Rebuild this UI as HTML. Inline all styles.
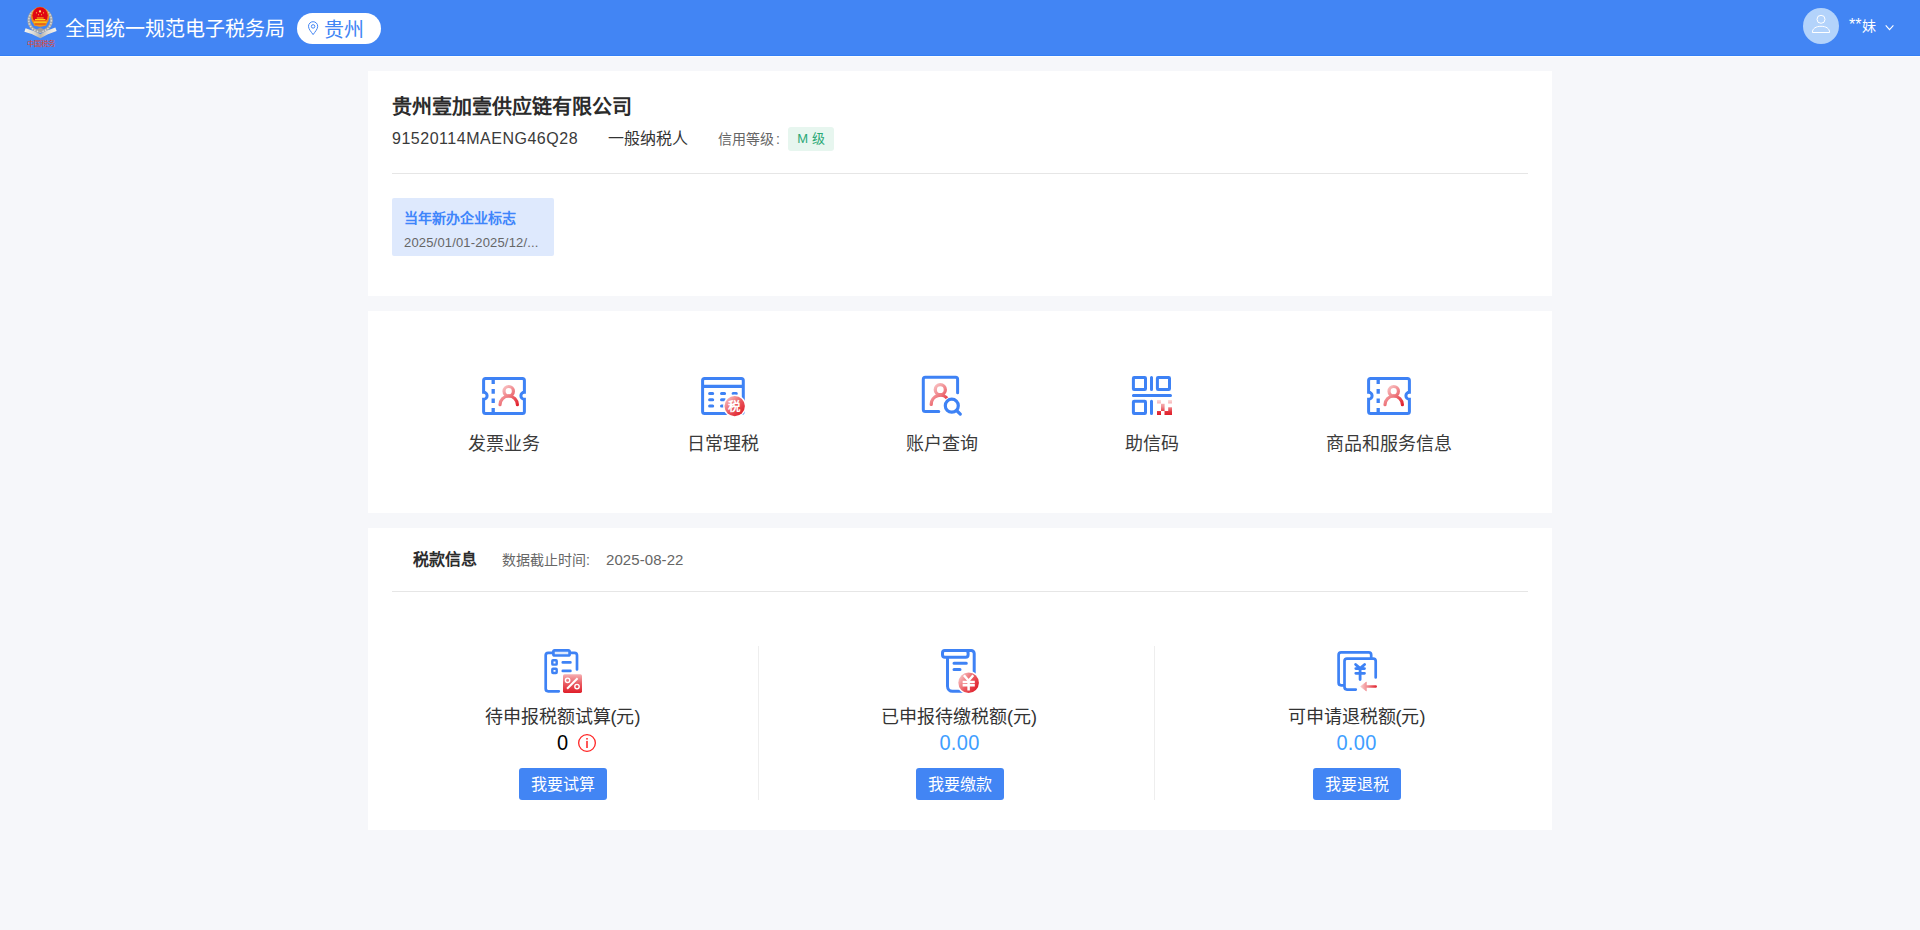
<!DOCTYPE html>
<html lang="zh-CN">
<head>
<meta charset="utf-8">
<title>全国统一规范电子税务局</title>
<style>
*{box-sizing:border-box;margin:0;padding:0}
html,body{width:1920px;height:930px;overflow:hidden}
body{background:#f6f7fa;font-family:"Liberation Sans",sans-serif;color:#333;position:relative}
.abs{position:absolute;white-space:nowrap;line-height:1}
.hdr{position:absolute;left:0;top:0;width:1920px;height:56px;background:#4285f4;border-bottom:1px solid #347ff5}
.hdrline{position:absolute;left:0;top:56px;width:1920px;height:1px;background:#fdfeff}
.card{position:absolute;left:368px;width:1184px;background:#fff}
.hr{position:absolute;left:392px;width:1136px;height:1px;background:#e6e6e6}
.ctr{position:absolute;white-space:nowrap;line-height:1;text-align:center;transform:translateX(-50%)}
.btn{position:absolute;width:88px;height:32px;border-radius:3px;background:#4285f4;color:#fff;font-size:16px;line-height:34px;text-align:center;white-space:nowrap;overflow:hidden}
.vline{position:absolute;top:646px;width:1px;height:154px;background:#eeeeee}
svg{position:absolute;overflow:visible}
</style>
</head>
<body>

<!-- ================= HEADER ================= -->
<div class="hdr"></div>
<div class="hdrline"></div>

<!-- logo placeholder -->
<svg id="logo" style="left:0;top:0" width="80" height="56" viewBox="0 0 80 56">
<defs>
<radialGradient id="lgR" cx="0.5" cy="0.3" r="0.75"><stop offset="0" stop-color="#e50012"/><stop offset="0.8" stop-color="#dc0a14"/><stop offset="1" stop-color="#e8501a"/></radialGradient>
<linearGradient id="lgRib" x1="0" y1="0" x2="1" y2="0"><stop offset="0" stop-color="#f6f4ee"/><stop offset="0.28" stop-color="#dcdad3"/><stop offset="0.5" stop-color="#b4b2ab"/><stop offset="0.72" stop-color="#dcdad3"/><stop offset="1" stop-color="#f6f4ee"/></linearGradient>
</defs>
<circle cx="40.1" cy="20.3" r="11.3" fill="none" stroke="#a4a6a9" stroke-width="2.7"/>
<circle cx="40.1" cy="20.3" r="11.3" fill="none" stroke="#e3e4e5" stroke-width="1.6" stroke-dasharray="1.3 1.5" opacity="0.85"/>
<path d="M36.6 29.6 L40.3 27.6 L44 29.6 L40.3 32.2 Z" fill="#9c9ea1"/>
<path d="M25 29.9 L33 32.6 L40.4 36.1 L48 32.2 L56 29.2" fill="none" stroke="url(#lgRib)" stroke-width="3.7" stroke-linejoin="miter"/>
<ellipse cx="40.1" cy="16.8" rx="9.1" ry="10" fill="#ef8a1d"/>
<ellipse cx="40.1" cy="15.6" rx="7.7" ry="8.3" fill="url(#lgR)"/>
<path d="M33.3 20.4 L46.9 20.4 L46.2 25.6 Q40.1 27.6 34 25.6 Z" fill="#f1921a"/>
<path d="M35 19 h10.4 v1.2 h-10.4z M36.8 17.6 h6.8 v1 h-6.8z M33.8 21.8 h12.8 v0.9 h-12.8z" fill="#ffd21a"/>
<path d="M34.8 23.6 h10.8 v0.9 h-10.8z" fill="#e03a14"/>
<circle cx="40" cy="11.4" r="1.15" fill="#ffe777"/>
<circle cx="36.5" cy="12.8" r="0.6" fill="#ffd84a"/><circle cx="43.5" cy="12.8" r="0.6" fill="#ffd84a"/>
<circle cx="38.5" cy="14.8" r="0.55" fill="#ffd84a"/><circle cx="41.5" cy="14.8" r="0.55" fill="#ffd84a"/>
<text x="41" y="46.2" font-size="7.2" fill="#e5452b" text-anchor="middle" font-family="Liberation Serif, serif" textLength="29" lengthAdjust="spacingAndGlyphs">中国税务</text>
</svg>

<div class="abs" id="title" style="left:65px;top:19px;font-size:20px;color:#fff">全国统一规范电子税务局</div>

<div class="abs" id="pill" style="left:297px;top:13px;width:84px;height:31px;border-radius:15.5px;background:#fff"></div>
<svg id="pin" style="left:306px;top:20px" width="14" height="17" viewBox="306 20 14 17">
<path d="M313.1 34.6 C311 31.6 308.5 29 308.5 26.3 A4.6 4.6 0 0 1 317.7 26.3 C317.7 29 315.2 31.6 313.1 34.6 Z" fill="none" stroke="#4285f4" stroke-width="1" stroke-linejoin="round"/>
<circle cx="313.1" cy="26.4" r="1.75" fill="none" stroke="#4285f4" stroke-width="1"/>
</svg>
<div class="abs" id="loc" style="left:324px;top:20px;font-size:20px;color:#4285f4">贵州</div>

<div class="abs" id="avatar" style="left:1803px;top:8px;width:36px;height:36px;border-radius:50%;background:#b3d3fb"></div>
<svg id="user" style="left:1803px;top:8px" width="36" height="36" viewBox="1803 8 36 36">
<circle cx="1821" cy="19.3" r="4" fill="none" stroke="#fff" stroke-width="1"/>
<path d="M1812.4 32.5 C1812.4 28.4 1816 26.3 1821 26.3 C1826 26.3 1829.6 28.4 1829.6 32.5 Z" fill="none" stroke="#fff" stroke-width="1" stroke-linejoin="miter"/>
</svg>
<div class="abs" id="uname" style="left:1849px;top:18.5px;font-size:14px;color:#fff"><span style="font-size:16px;line-height:14px;letter-spacing:0.1px;position:relative;top:-0.5px">**</span>妹</div>
<svg id="chev" style="left:1884px;top:23px" width="12" height="9" viewBox="1884 23 12 9">
<path d="M1885.7 25.3 L1889.55 29.7 L1893.4 25.3" fill="none" stroke="#fff" stroke-width="1.1"/>
</svg>

<!-- ================= CARD 1 ================= -->
<div class="card" style="top:71px;height:225px"></div>
<div class="abs" id="corp" style="left:392px;top:97px;font-size:20px;font-weight:bold;color:#2b2b2b">贵州壹加壹供应链有限公司</div>
<div class="abs" id="taxid" style="left:392px;top:130.5px;font-size:16px;color:#3a3a3a;letter-spacing:0.52px">91520114MAENG46Q28</div>
<div class="abs" id="ttype" style="left:608px;top:131px;font-size:16px;color:#333">一般纳税人</div>
<div class="abs" id="credit" style="left:718px;top:132px;font-size:14px;color:#666">信用等级<span style="margin-left:2px">:</span></div>
<div class="abs" id="mbadge" style="left:788px;top:127px;width:46px;height:24px;border-radius:3px;background:#e7f6ef;color:#2aa876;font-size:13px;line-height:24px;text-align:center">M 级</div>
<div class="hr" style="top:173px"></div>
<div class="abs" id="tag" style="left:392px;top:198px;width:162px;height:58px;border-radius:2px;background:#dee9fd"></div>
<div class="abs" id="tagt" style="left:404px;top:211px;font-size:14px;font-weight:bold;color:#3f85fb">当年新办企业标志</div>
<div class="abs" id="tagd" style="left:404px;top:236px;font-size:13px;color:#666;letter-spacing:0.17px">2025/01/01-2025/12/...</div>

<!-- ================= CARD 2 ================= -->
<div class="card" style="top:311px;height:202px"></div>
<div class="ctr" id="l1" style="left:504px;top:435px;font-size:18px;color:#3a3a3a">发票业务</div>
<div class="ctr" id="l2" style="left:723px;top:435px;font-size:18px;color:#3a3a3a">日常理税</div>
<div class="ctr" id="l3" style="left:942px;top:435px;font-size:18px;color:#3a3a3a">账户查询</div>
<div class="ctr" id="l4" style="left:1152px;top:435px;font-size:18px;color:#3a3a3a">助信码</div>
<div class="ctr" id="l5" style="left:1389px;top:435px;font-size:18px;color:#3a3a3a">商品和服务信息</div>

<svg id="icons2" style="left:0;top:0" width="1920" height="930" viewBox="0 0 1920 930">
<defs>
<linearGradient id="gP1" gradientUnits="userSpaceOnUse" x1="501" y1="386" x2="518" y2="405"><stop offset="0" stop-color="#fbd0d0"/><stop offset="0.5" stop-color="#ee7a80"/><stop offset="1" stop-color="#e2202c"/></linearGradient>
<linearGradient id="gP3" gradientUnits="userSpaceOnUse" x1="932" y1="384" x2="949" y2="402"><stop offset="0" stop-color="#fbd0d0"/><stop offset="0.55" stop-color="#ee7a80"/><stop offset="1" stop-color="#e2202c"/></linearGradient>
<linearGradient id="gC2" gradientUnits="userSpaceOnUse" x1="726" y1="397" x2="743" y2="415"><stop offset="0" stop-color="#f9c4c4"/><stop offset="0.55" stop-color="#e9555c"/><stop offset="1" stop-color="#df1a26"/></linearGradient>
<linearGradient id="gQ4" gradientUnits="userSpaceOnUse" x1="0" y1="400" x2="0" y2="415"><stop offset="0" stop-color="#fcdada"/><stop offset="0.45" stop-color="#f08e92"/><stop offset="0.8" stop-color="#e3303a"/><stop offset="1" stop-color="#e01f2a"/></linearGradient>
<g id="ticket">
<path d="M485.6 378.5 H522.4 a2 2 0 0 1 2 2 V392.3 a3.5 3.5 0 0 0 0 7 V411.4 a2 2 0 0 1 -2 2 H485.6 a2 2 0 0 1 -2 -2 V399.3 a3.5 3.5 0 0 0 0 -7 V380.5 a2 2 0 0 1 2 -2 Z" fill="none" stroke="#3e82f5" stroke-width="3"/>
<path d="M493.2 380 V384.1 M493.2 389 V393.8 M493.2 398.4 V403.1 M493.2 408 V412" fill="none" stroke="#3e82f5" stroke-width="3.3"/>
<circle cx="508.7" cy="391.2" r="4.7" fill="none" stroke="url(#gP1)" stroke-width="3.2"/>
<path d="M500 404.7 A8.7 8.7 0 0 1 517.4 404.7" fill="none" stroke="url(#gP1)" stroke-width="3.2" stroke-linecap="round"/>
</g>
</defs>
<use href="#ticket"/>
<use href="#ticket" transform="translate(885 0)"/>

<!-- icon 2 : window + tax badge -->
<rect x="702.6" y="378.5" width="40.7" height="34.9" rx="2" fill="none" stroke="#3e82f5" stroke-width="3"/>
<path d="M702.6 386.4 H743.3" stroke="#3e82f5" stroke-width="3.2" fill="none"/>
<path d="M709.6 393.6 H712.7 M721.5 393.6 H724.6 M733.1 393.6 H736.3 M709.6 399.8 H712.7 M721.5 399.8 H724.6 M709.6 406.1 H712.7 M721.5 406.1 H724.6" stroke="#3e82f5" stroke-width="3" stroke-linecap="round" fill="none"/>
<circle cx="734.7" cy="406.1" r="11.6" fill="#fff"/>
<circle cx="734.7" cy="406.1" r="10.2" fill="url(#gC2)"/>
<text x="734.7" y="410.6" font-size="12.5" font-weight="bold" fill="#fff" text-anchor="middle" font-family="Liberation Sans, sans-serif">税</text>

<!-- icon 3 : account search -->
<path d="M957.6 392.7 V379.3 a2 2 0 0 0 -2 -2 H925.3 a2 2 0 0 0 -2 2 V409.5 a2 2 0 0 0 2 2 H938.8" fill="none" stroke="#3e82f5" stroke-width="3" stroke-linecap="round"/>
<circle cx="940.3" cy="389.7" r="5.05" fill="none" stroke="url(#gP3)" stroke-width="3.3"/>
<path d="M931.2 404.4 A9.1 9.1 0 0 1 947.9 399.4" fill="none" stroke="url(#gP3)" stroke-width="3.3" stroke-linecap="round"/>
<circle cx="951.8" cy="405.7" r="9.1" fill="#fff"/>
<circle cx="951.8" cy="405.7" r="6.5" fill="none" stroke="#3e82f5" stroke-width="3.2"/>
<path d="M956.6 410.5 L960.3 414.1" fill="none" stroke="#3e82f5" stroke-width="3.2" stroke-linecap="round"/>

<!-- icon 4 : QR -->
<rect x="1133.4" y="377.5" width="12.1" height="12" rx="0.7" fill="none" stroke="#3e82f5" stroke-width="3"/>
<rect x="1157.4" y="377.5" width="12.1" height="12" rx="0.7" fill="none" stroke="#3e82f5" stroke-width="3"/>
<rect x="1133.4" y="401.3" width="12.1" height="12.1" rx="0.7" fill="none" stroke="#3e82f5" stroke-width="3"/>
<path d="M1151.5 377.5 V389.5 M1151.5 401.3 V413.4 M1133.4 395.4 H1170.5" fill="none" stroke="#3e82f5" stroke-width="3" stroke-linecap="round"/>
<path d="M1157 400 h3.9 v3.6 h-3.9z M1168.1 400 h3.9 v3.6 h-3.9z M1161 403.8 h3.6 v7.1 h-3.6z M1157 410.9 h4 v4 h-4z M1164.5 410.9 h7.5 v4 h-7.5z M1168.2 407.2 h3.8 v3.8 h-3.8z" fill="url(#gQ4)"/>
</svg>

<!-- ================= CARD 3 ================= -->
<div class="card" style="top:528px;height:302px"></div>
<div class="abs" id="sect" style="left:413px;top:552px;font-size:16px;font-weight:bold;color:#2c2c2c">税款信息</div>
<div class="abs" id="dlab" style="left:502px;top:553px;font-size:14px;color:#666">数据截止时间:</div>
<div class="abs" id="dval" style="left:606px;top:552px;font-size:15px;color:#666;letter-spacing:0.08px">2025-08-22</div>
<div class="hr" style="top:591px"></div>
<div class="vline" style="left:758px"></div>
<div class="vline" style="left:1154px"></div>

<div class="ctr" id="c1l" style="left:562.5px;top:708px;font-size:18px;color:#333">待申报税额试算(元)</div>
<div class="abs" id="c1v" style="left:557px;top:733px;font-size:20px;color:#000;transform:scaleY(1.08);transform-origin:50% 85%">0</div>
<svg id="info" style="left:577px;top:733px" width="20" height="20" viewBox="577 733 20 20">
<circle cx="587" cy="743" r="8.35" fill="none" stroke="#ff2424" stroke-width="1.3"/>
<rect x="586.1" y="738" width="1.8" height="1.6" fill="#ff4545"/>
<rect x="586.1" y="740.9" width="1.8" height="7.1" fill="#ff4545"/>
</svg>
<div class="btn" style="left:519px;top:768px">我要试算</div>

<div class="ctr" id="c2l" style="left:959px;top:708px;font-size:18px;color:#333">已申报待缴税额(元)</div>
<div class="ctr" id="c2v" style="left:959.5px;top:733px;font-size:20px;color:#409eff;transform:translateX(-50%) scaleY(1.08);transform-origin:50% 85%;letter-spacing:0.3px">0.00</div>
<div class="btn" style="left:916px;top:768px">我要缴款</div>

<div class="ctr" id="c3l" style="left:1356.5px;top:708px;font-size:18px;color:#333">可申请退税额(元)</div>
<div class="ctr" id="c3v" style="left:1356.5px;top:733px;font-size:20px;color:#409eff;transform:translateX(-50%) scaleY(1.08);transform-origin:50% 85%;letter-spacing:0.3px">0.00</div>
<div class="btn" style="left:1313px;top:768px">我要退税</div>

<svg id="icons3" style="left:0;top:0" width="1920" height="930" viewBox="0 0 1920 930">
<defs>
<linearGradient id="gS1" gradientUnits="userSpaceOnUse" x1="0" y1="674" x2="0" y2="693"><stop offset="0" stop-color="#f6b3b6"/><stop offset="0.5" stop-color="#ea5c63"/><stop offset="1" stop-color="#e01e29"/></linearGradient>
<linearGradient id="gC5" gradientUnits="userSpaceOnUse" x1="959" y1="676" x2="978" y2="690"><stop offset="0" stop-color="#f9caca"/><stop offset="0.5" stop-color="#ea5a61"/><stop offset="1" stop-color="#df1a26"/></linearGradient>
<linearGradient id="gA6" gradientUnits="userSpaceOnUse" x1="1360" y1="0" x2="1377" y2="0"><stop offset="0" stop-color="#fad2d2"/><stop offset="0.45" stop-color="#f0888d"/><stop offset="1" stop-color="#e01e29"/></linearGradient>
</defs>

<!-- clipboard + % -->
<path d="M577 669.4 V655.3 a2.5 2.5 0 0 0 -2.5 -2.5 H548.2 a2.5 2.5 0 0 0 -2.5 2.5 V688.8 a2.5 2.5 0 0 0 2.5 2.5 H558.8" fill="none" stroke="#3e82f5" stroke-width="2.7" stroke-linecap="round"/>
<rect x="553.4" y="650.3" width="16.2" height="5.2" rx="1.3" fill="#dfe9fd" stroke="#3e82f5" stroke-width="2.7"/>
<rect x="552.3" y="660.3" width="4.4" height="4.3" rx="0.7" fill="none" stroke="#3e82f5" stroke-width="2.4"/>
<rect x="552.3" y="668.7" width="4.4" height="4.3" rx="0.7" fill="none" stroke="#3e82f5" stroke-width="2.4"/>
<path d="M562.8 662.4 H570.4 M562.8 670.9 H570.4" fill="none" stroke="#3e82f5" stroke-width="2.7" stroke-linecap="round"/>
<rect x="563" y="674.2" width="19" height="18.7" rx="1.6" fill="url(#gS1)"/>
<path d="M567.1 688.8 L577.6 678.3" fill="none" stroke="#fff" stroke-width="2"/>
<circle cx="567.6" cy="680.3" r="2.2" fill="none" stroke="#fff" stroke-width="1.4"/>
<circle cx="577" cy="686.6" r="2.2" fill="none" stroke="#fff" stroke-width="1.4"/>

<!-- scroll + yen -->
<path d="M947.5 657.2 V686.3 a5 5 0 0 0 5 5 H964 M965 650.4 H971.2 a3 3 0 0 1 3 3 V675" fill="none" stroke="#3e82f5" stroke-width="3"/>
<rect x="942.5" y="650.4" width="25.6" height="6.8" rx="2.4" fill="#fff" stroke="#3e82f5" stroke-width="3"/>
<path d="M954 663.2 H966.3 M954 669.4 H960" fill="none" stroke="#3e82f5" stroke-width="3" stroke-linecap="round"/>
<circle cx="968.6" cy="682.7" r="11.7" fill="#fff"/>
<circle cx="968.6" cy="682.7" r="10.3" fill="url(#gC5)"/>
<path d="M963.9 675.3 L968.6 680.7 L973.3 675.3 M968.6 680.4 V690.4 M962.6 682 H974.8 M962.6 685.3 H974.8" fill="none" stroke="#fff" stroke-width="2.5" stroke-linejoin="miter"/>

<!-- pages + yen + arrow -->
<path d="M1371.2 658 V654.9 a2.5 2.5 0 0 0 -2.5 -2.5 H1341.1 a2.5 2.5 0 0 0 -2.5 2.5 V682.8 a2.5 2.5 0 0 0 2.5 2.5 H1344.5" fill="none" stroke="#3e82f5" stroke-width="2.7"/>
<path d="M1375.7 677.4 V661.1 a2.5 2.5 0 0 0 -2.5 -2.5 H1347 a2.5 2.5 0 0 0 -2.5 2.5 V687.1 a2.5 2.5 0 0 0 2.5 2.5 H1355.8" fill="none" stroke="#3e82f5" stroke-width="2.7" stroke-linecap="round"/>
<path d="M1355.6 664.5 L1360.1 668.4 L1364.6 664.5 M1355.8 668.6 H1364.5 M1355.8 673.3 H1364.5 M1360.1 668 V679.6" fill="none" stroke="#3e82f5" stroke-width="2.8" stroke-linecap="round" stroke-linejoin="round"/>
<path d="M1364.5 686.5 H1375.6" fill="none" stroke="url(#gA6)" stroke-width="2.7" stroke-linecap="round"/>
<path d="M1360.6 686.5 L1366.3 682 V691 Z" fill="url(#gA6)" stroke="url(#gA6)" stroke-width="0.7" stroke-linejoin="round"/>
</svg>

</body>
</html>
